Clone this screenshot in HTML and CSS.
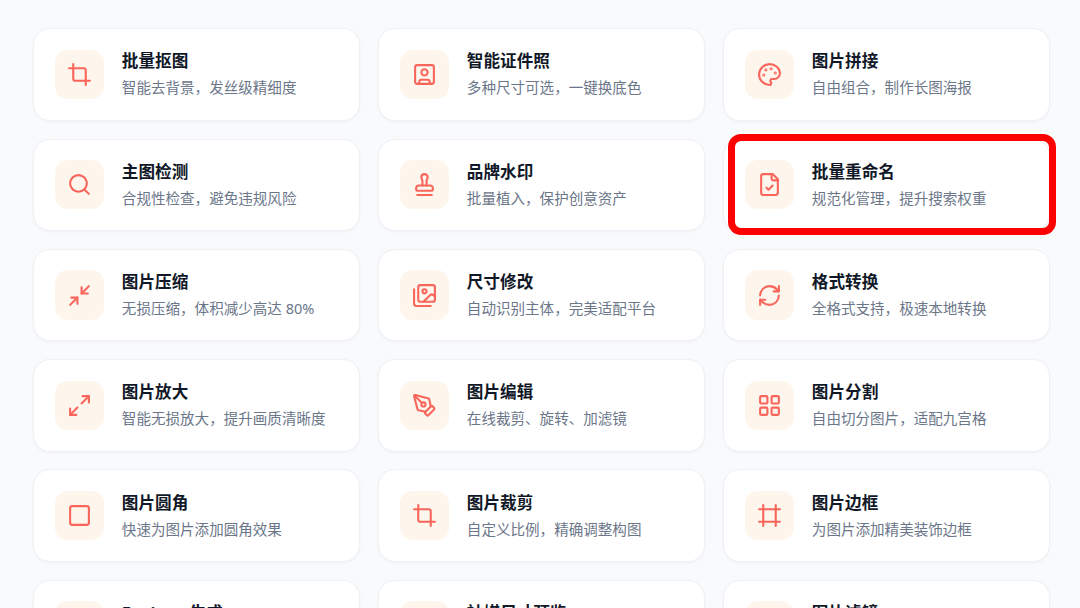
FILE: index.html
```html
<!DOCTYPE html>
<html lang="zh-CN">
<head>
    <meta charset="UTF-8">
    <meta name="viewport" content="width=device-width, initial-scale=1.0">
    <title>图片工具</title>
    <link rel="stylesheet" href="styles.css">
</head>
<body>
    <div class="tool-grid">
        <div class="tool-card">
            <div class="tool-icon"><svg viewBox="0 0 24 24"><path d="M6 2v14a2 2 0 0 0 2 2h14"/><path d="M18 22V8a2 2 0 0 0-2-2H2"/></svg></div>
            <div class="tool-text"><h3>批量抠图</h3><p>智能去背景，发丝级精细度</p></div>
        </div>
        <div class="tool-card">
            <div class="tool-icon"><svg viewBox="0 0 24 24"><rect x="3" y="3" width="18" height="18" rx="2"/><circle cx="12" cy="10" r="3"/><path d="M7 21v-2a2 2 0 0 1 2-2h6a2 2 0 0 1 2 2v2"/></svg></div>
            <div class="tool-text"><h3>智能证件照</h3><p>多种尺寸可选，一键换底色</p></div>
        </div>
        <div class="tool-card">
            <div class="tool-icon"><svg viewBox="0 0 24 24"><path d="M12 2C6.5 2 2 6.5 2 12s4.5 10 10 10c.926 0 1.648-.746 1.648-1.688 0-.437-.18-.835-.437-1.125-.29-.289-.438-.652-.438-1.125a1.64 1.64 0 0 1 1.668-1.668h1.996c3.051 0 5.555-2.503 5.555-5.554C21.965 6.012 17.461 2 12 2z"/><circle cx="13.5" cy="6.5" r=".5"/><circle cx="17.5" cy="10.5" r=".5"/><circle cx="8.5" cy="7.5" r=".5"/><circle cx="6.5" cy="12.5" r=".5"/></svg></div>
            <div class="tool-text"><h3>图片拼接</h3><p>自由组合，制作长图海报</p></div>
        </div>

        <div class="tool-card">
            <div class="tool-icon"><svg viewBox="0 0 24 24"><circle cx="11" cy="11" r="8"/><path d="m21 21-4.3-4.3"/></svg></div>
            <div class="tool-text"><h3>主图检测</h3><p>合规性检查，避免违规风险</p></div>
        </div>
        <div class="tool-card">
            <div class="tool-icon"><svg viewBox="0 0 24 24"><path d="M5 22h14"/><path d="M19.27 13.73A2.5 2.5 0 0 0 17.5 13h-11A2.5 2.5 0 0 0 4 15.5V17a1 1 0 0 0 1 1h14a1 1 0 0 0 1-1v-1.5c0-.66-.26-1.3-.73-1.77Z"/><path d="M14 13V8.5C14 7 15 7 15 5a3 3 0 0 0-3-3c-1.66 0-3 1-3 3s1 2 1 3.5V13"/></svg></div>
            <div class="tool-text"><h3>品牌水印</h3><p>批量植入，保护创意资产</p></div>
        </div>
        <div class="tool-card">
            <div class="tool-icon"><svg viewBox="0 0 24 24"><path d="M15 2H6a2 2 0 0 0-2 2v16a2 2 0 0 0 2 2h12a2 2 0 0 0 2-2V7Z"/><path d="M14 2v4a2 2 0 0 0 2 2h4"/><path d="m9 15 2 2 4-4"/></svg></div>
            <div class="tool-text"><h3>批量重命名</h3><p>规范化管理，提升搜索权重</p></div>
            <div class="highlight-frame"></div>
        </div>

        <div class="tool-card">
            <div class="tool-icon"><svg viewBox="0 0 24 24"><path d="m14 10 7-7"/><path d="M20 10h-6V4"/><path d="m3 21 7-7"/><path d="M4 14h6v6"/></svg></div>
            <div class="tool-text"><h3>图片压缩</h3><p>无损压缩，体积减少高达 80%</p></div>
        </div>
        <div class="tool-card">
            <div class="tool-icon"><svg viewBox="0 0 24 24"><path d="M18 22H4a2 2 0 0 1-2-2V6"/><path d="m22 13-1.296-1.296a2.41 2.41 0 0 0-3.408 0L11 18"/><circle cx="12" cy="8" r="2"/><rect x="6" y="2" width="16" height="16" rx="2"/></svg></div>
            <div class="tool-text"><h3>尺寸修改</h3><p>自动识别主体，完美适配平台</p></div>
        </div>
        <div class="tool-card">
            <div class="tool-icon"><svg viewBox="0 0 24 24"><path d="M3 12a9 9 0 0 1 9-9 9.75 9.75 0 0 1 6.74 2.74L21 8"/><path d="M21 3v5h-5"/><path d="M21 12a9 9 0 0 1-9 9 9.75 9.75 0 0 1-6.74-2.74L3 16"/><path d="M8 16H3v5"/></svg></div>
            <div class="tool-text"><h3>格式转换</h3><p>全格式支持，极速本地转换</p></div>
        </div>

        <div class="tool-card">
            <div class="tool-icon"><svg viewBox="0 0 24 24"><path d="M15 3h6v6"/><path d="m21 3-7 7"/><path d="m3 21 7-7"/><path d="M9 21H3v-6"/></svg></div>
            <div class="tool-text"><h3>图片放大</h3><p>智能无损放大，提升画质清晰度</p></div>
        </div>
        <div class="tool-card">
            <div class="tool-icon"><svg viewBox="0 0 24 24"><path d="M15.707 21.293a1 1 0 0 1-1.414 0l-1.586-1.586a1 1 0 0 1 0-1.414l5.586-5.586a1 1 0 0 1 1.414 0l1.586 1.586a1 1 0 0 1 0 1.414z"/><path d="m18 13-1.375-6.874a1 1 0 0 0-.746-.776L3.235 2.028a1 1 0 0 0-1.207 1.207L5.35 15.879a1 1 0 0 0 .776.746L13 18"/><path d="m2.3 2.3 7.286 7.286"/><circle cx="11" cy="11" r="2"/></svg></div>
            <div class="tool-text"><h3>图片编辑</h3><p>在线裁剪、旋转、加滤镜</p></div>
        </div>
        <div class="tool-card">
            <div class="tool-icon"><svg viewBox="0 0 24 24"><rect x="3" y="3" width="7" height="7" rx="1"/><rect x="14" y="3" width="7" height="7" rx="1"/><rect x="14" y="14" width="7" height="7" rx="1"/><rect x="3" y="14" width="7" height="7" rx="1"/></svg></div>
            <div class="tool-text"><h3>图片分割</h3><p>自由切分图片，适配九宫格</p></div>
        </div>

        <div class="tool-card">
            <div class="tool-icon"><svg viewBox="0 0 24 24"><rect x="3" y="3" width="18" height="18" rx="2"/></svg></div>
            <div class="tool-text"><h3>图片圆角</h3><p>快速为图片添加圆角效果</p></div>
        </div>
        <div class="tool-card">
            <div class="tool-icon"><svg viewBox="0 0 24 24"><path d="M6 2v14a2 2 0 0 0 2 2h14"/><path d="M18 22V8a2 2 0 0 0-2-2H2"/></svg></div>
            <div class="tool-text"><h3>图片裁剪</h3><p>自定义比例，精确调整构图</p></div>
        </div>
        <div class="tool-card">
            <div class="tool-icon"><svg viewBox="0 0 24 24"><path d="M22 6H2"/><path d="M22 18H2"/><path d="M6 2v20"/><path d="M18 2v20"/></svg></div>
            <div class="tool-text"><h3>图片边框</h3><p>为图片添加精美装饰边框</p></div>
        </div>

        <div class="tool-card">
            <div class="tool-icon"></div>
            <div class="tool-text"><h3>Favicon 生成</h3><p></p></div>
        </div>
        <div class="tool-card">
            <div class="tool-icon"></div>
            <div class="tool-text"><h3>社媒尺寸预览</h3><p></p></div>
        </div>
        <div class="tool-card">
            <div class="tool-icon"></div>
            <div class="tool-text"><h3>图片滤镜</h3><p></p></div>
        </div>
    </div>
</body>
</html>
```

FILE: styles.css
```css
html, body {
    height: 100%;
    overflow: hidden;
}

body {
    margin: 0;
    background-color: #f8fafc;
    font-family: "Noto Sans", "Noto Sans CJK SC", sans-serif;
}

.tool-grid {
    display: grid;
    grid-template-columns: repeat(3, 327px);
    grid-auto-rows: 92.4px;
    column-gap: 18px;
    row-gap: 17.9px;
    padding: 28.3px 0 0 33.2px;
}

.tool-card {
    position: relative;
    display: flex;
    align-items: center;
    gap: 17.9px;
    padding: 0 20.4px;
    background: #ffffff;
    border: 1px solid #eef1f5;
    border-radius: 17px;
    box-shadow: 0 1px 3px rgba(15, 23, 42, 0.04);
}

.tool-icon {
    display: flex;
    align-items: center;
    justify-content: center;
    flex-shrink: 0;
    width: 49.4px;
    height: 49.4px;
    background-color: #fef6ec;
    border-radius: 12.5px;
}

.tool-icon svg {
    width: 25px;
    height: 25px;
    fill: none;
    stroke: #f9655a;
    stroke-width: 2;
    stroke-linecap: round;
    stroke-linejoin: round;
}

.tool-text {
    padding-bottom: 1px;
}

.tool-text h3 {
    margin: 0 0 5px;
    font-size: 16.6px;
    font-weight: 700;
    line-height: 23px;
    color: #111827;
}

.tool-text p {
    margin: 0;
    min-height: 21px;
    font-size: 14.55px;
    line-height: 21px;
    color: #6b7689;
}

.highlight-frame {
    position: absolute;
    top: -5.3px;
    left: 3.5px;
    right: -6.5px;
    bottom: -5px;
    border: 7.5px solid #fe0000;
    border-radius: 13px;
}
```
